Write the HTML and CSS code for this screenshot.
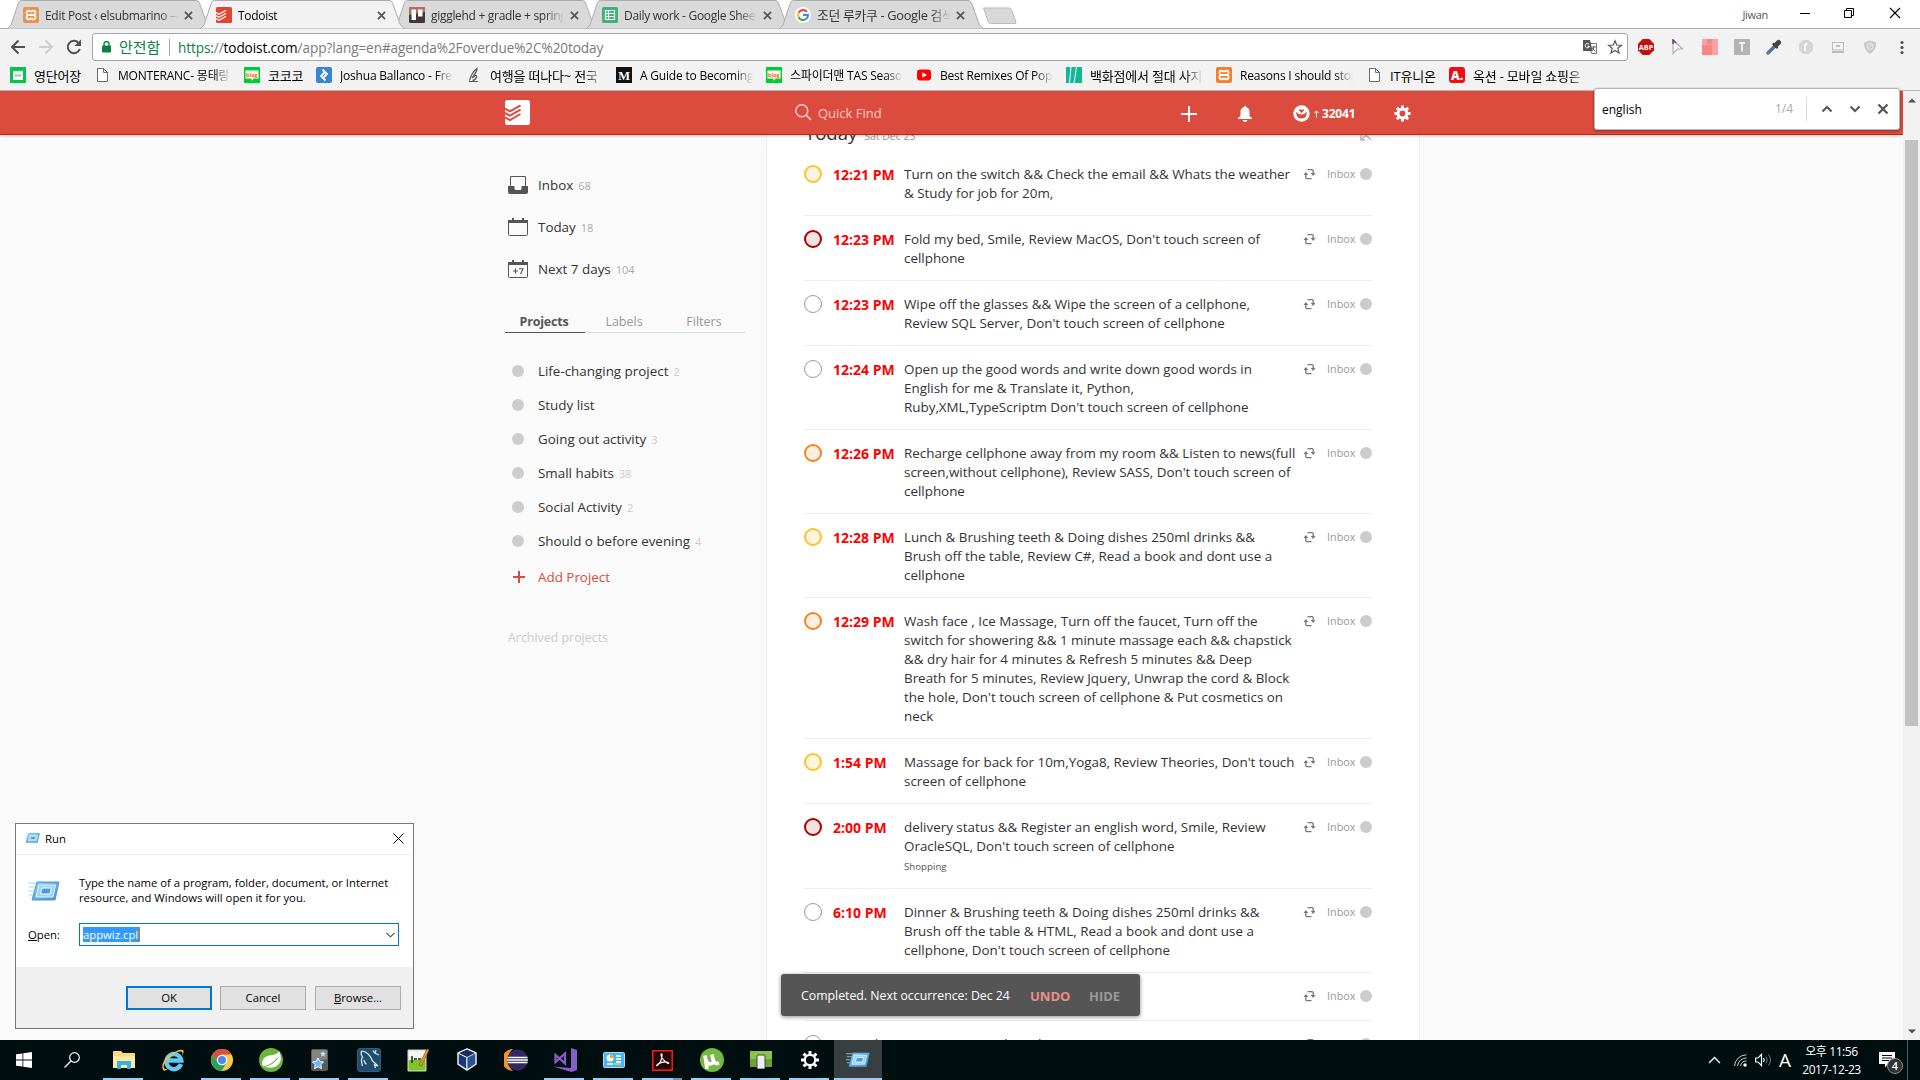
FILE: index.html
```html
<!DOCTYPE html>
<html lang="en">
<head>
<meta charset="utf-8">
<title>Todoist</title>
<link rel="stylesheet" href="styles.css">
</head>
<body>
<svg class="defs" width="0" height="0">
  <defs>
    <linearGradient id="runBlue" x1="0" y1="0" x2="1" y2="1"><stop offset="0" stop-color="#8fd0f5"/><stop offset="1" stop-color="#3d8fd0"/></linearGradient>
    <symbol id="tab-shape" viewBox="0 0 205 29"><path d="M0 29 L4 25 L11.500 2.500 Q12.300 .5 14.500 .5 H189 Q191.500 .5 192.300 2.500 L200.500 25 L205 29Z" stroke="#acacac"/></symbol>
    <symbol id="close" viewBox="0 0 10 10"><path d="M1 1 9 9 M9 1 1 9" stroke="currentColor" stroke-width="1.900"/></symbol>
    <symbol id="xampp" viewBox="0 0 16 16"><rect width="16" height="16" rx="2" fill="#f0802c"/><path d="M5 8 h6 M5.500 8 a2 2.200 0 1 1 1.500-3.600 h2 a2 2.200 0 1 1 1.500 3.600 a2 2.200 0 1 1-1.500 3.600 h-2 a2 2.200 0 1 1-1.500-3.600" fill="none" stroke="#fff" stroke-width="1.800"/></symbol>
    <symbol id="todo" viewBox="0 0 25 25"><path d="M0 8.500 L5 11.300 15.500 5.300 M0 13 L5 15.700 15.500 9.700 M0 17.400 L5 20.100 15.500 14" fill="none" stroke="currentColor" stroke-width="2"/></symbol>
    <symbol id="page" viewBox="0 0 16 16"><path d="M3.500 1.500 h6 l4 4 v9 h-10z M9.500 1.500 v4 h4" fill="#fff" stroke="#6a6a6a"/></symbol>
    <symbol id="blog" viewBox="0 0 16 16"><rect width="16" height="16" fill="#0c3"/><path d="M1.500 3.500 h13 v8 h-5 l-2 2.500 v-2.500 h-6z" fill="#fff"/><text x="2" y="9.800" font-family="Open Sans" font-size="5.500" font-weight="700" fill="#f60">blog</text></symbol>
    <symbol id="recur" viewBox="0 0 12 12"><path d="M4 1.600 h4.500 q1.200 0 1.200 1.200 v3.200 M8 10.600 h-4.500 q-1.200 0-1.200-1.200 v-3.200" fill="none" stroke="#777" stroke-width="1.300"/><path d="M7.200 5 h4.800 l-2.400 3z M0 7 h4.800 l-2.400-3z" fill="#777"/></symbol>
    <symbol id="cal" viewBox="0 0 20 18"><rect x=".5" y="2.500" width="19" height="15" rx="1" fill="none" stroke="#555"/><path d="M0 2 h20 v3 h-20z M4 0 h2 v2 h-2z M14 0 h2 v2 h-2z" fill="#555"/></symbol>
    <symbol id="run" viewBox="0 0 32 22"><path d="M0 2 h8 M1 6 h7 M0 10 h6 M1 14 h5" stroke="#a9d6f2"/><path d="M9 1 H31 L27 19 H4z" fill="url(#runBlue)" stroke="#4b98cf"/><path d="M11 4 H27.500 L25 16 H8z" fill="#9ad3f3" stroke="#e6f6ff"/><path d="M14 7 H23.500 L22 13 H12.500z" fill="#4a9bd6" stroke="#fff"/></symbol>
    <symbol id="gear" viewBox="0 0 18 18"><circle cx="9" cy="9" r="4.700" fill="none" stroke="currentColor" stroke-width="3.200"/><path d="M9 .5 V4 M9 14 V17.500 M.5 9 H4 M14 9 H17.500 M3 3 L5.500 5.500 M12.500 12.500 L15 15 M15 3 L12.500 5.500 M3 15 L5.500 12.500" stroke="currentColor" stroke-width="3"/></symbol>
  </defs>
</svg>

<div class="desktop">
  <div class="browser">
    <div class="tabstrip">
      <div class="tab"><svg class="tab-bg"><use href="#tab-shape"/></svg><svg class="fav dim"><use href="#xampp"/></svg><span class="tab-title">Edit Post ‹ elsubmarino — W</span><svg class="x"><use href="#close"/></svg></div>
      <div class="tab active"><svg class="tab-bg"><use href="#tab-shape"/></svg><svg class="fav" viewBox="0 0 16 16"><rect width="16" height="16" rx="1.500" fill="#e44332"/><path d="M0 5.500 L3 7.300 10 3.300 M0 8.500 L3 10.300 10 6.300 M0 11.500 L3 13.300 10 9.300" fill="none" stroke="#fff" stroke-width="1.300"/></svg><span class="tab-title">Todoist</span><svg class="x"><use href="#close"/></svg></div>
      <div class="tab"><svg class="tab-bg"><use href="#tab-shape"/></svg><svg class="fav" viewBox="0 0 16 16"><rect width="16" height="16" rx="1.500" fill="#42343c"/><path d="M0 8 V1.500 Q0 0 1.500 0 H14.500 Q16 0 16 1.500 V5z" fill="#b96d62"/><rect x="2.500" y="2.500" width="4.500" height="10.500" fill="#fff"/><rect x="9" y="2.500" width="4.500" height="7" fill="#fff"/></svg><span class="tab-title">gigglehd + gradle + spring</span><svg class="x"><use href="#close"/></svg></div>
      <div class="tab"><svg class="tab-bg"><use href="#tab-shape"/></svg><svg class="fav" viewBox="0 0 16 16"><rect width="16" height="16" rx="1.500" fill="#3fb27a"/><path d="M3.500 3.500 h9 v9 h-9z M3.500 6.500 h9 M3.500 9.500 h9 M6.500 3.500 v9" fill="none" stroke="#fff" stroke-width="1.200"/></svg><span class="tab-title">Daily work - Google Sheets</span><svg class="x"><use href="#close"/></svg></div>
      <div class="tab"><svg class="tab-bg"><use href="#tab-shape"/></svg><svg class="fav" viewBox="0 0 16 16"><circle cx="8" cy="8" r="8" fill="#fff"/><g fill="none" stroke-width="2"><path d="M12 4.800 A5 5 0 0 0 3.600 5.700" stroke="#ea4335"/><path d="M3.600 5.700 A5 5 0 0 0 3.600 10.300" stroke="#fbbc05"/><path d="M3.600 10.300 A5 5 0 0 0 11.300 11.800" stroke="#34a853"/><path d="M11.300 11.800 A5 5 0 0 0 13 8 H8" stroke="#4285f4"/></g></svg><span class="tab-title ko">조던 루카쿠 - Google 검색</span><svg class="x"><use href="#close"/></svg></div>
      <svg class="newtab" viewBox="0 0 36 18"><path d="M1.500 1 H27 Q29 1 29.700 3 L34 15 Q34.500 16.500 33 16.500 H8.500 Q7 16.500 6.300 15z" fill="#d8d8d8" stroke="#bbb"/></svg>
      <div class="win-controls">
        <span class="profile">Jiwan</span>
        <svg width="10" height="12" viewBox="0 0 10 12"><path d="M0 6.500 H10" stroke="#000"/></svg>
        <svg width="11" height="12" viewBox="0 0 11 12"><path d="M.5 3.500 h7 v7 h-7z M2.500 3.500 v-2 h7 v7 h-2" fill="none" stroke="#000"/></svg>
        <svg width="12" height="12" viewBox="0 0 12 12"><path d="M1 1 11 11 M11 1 1 11" stroke="#000" stroke-width="1.100"/></svg>
      </div>
    </div>

    <div class="toolbar">
      <div class="nav">
        <svg width="16" height="16" viewBox="0 0 16 16"><path d="M15 8 H2 M8.500 1.500 L2 8 L8.500 14.500" fill="none" stroke="#505050" stroke-width="2"/></svg>
        <svg width="16" height="16" viewBox="0 0 16 16"><path d="M1 8 H14 M7.500 1.500 L14 8 L7.500 14.500" fill="none" stroke="#cdcdcd" stroke-width="2"/></svg>
        <svg width="16" height="16" viewBox="0 0 16 16"><path d="M13.800 10 A6.200 6.200 0 1 1 12.600 3.800" fill="none" stroke="#505050" stroke-width="2"/><path d="M15 0.500 V7 H8.500z" fill="#505050"/></svg>
      </div>
      <div class="omnibox">
        <svg class="lock" width="10" height="12" viewBox="0 0 10 12"><rect x="0" y="4.500" width="9" height="7" rx=".8" fill="#0b8043"/><path d="M2 5 V3 a2.500 2.500 0 0 1 5 0 V5" fill="none" stroke="#0b8043" stroke-width="1.400"/></svg>
        <span class="secure">안전함</span>
        <span class="url"><i class="green">https:</i>//<b>todoist.com</b>/app?lang=en#agenda%2Foverdue%2C%20today</span>
        <svg class="translate" width="16" height="16" viewBox="0 0 16 16"><path d="M6.500 4.500 h8 v10 h-5z" fill="#fff" stroke="#777"/><path d="M1 1 h7 l2.500 11 h-9.500z" fill="#555"/><path d="M7 5.200 a2.200 2.200 0 1 0 .5 2 h-2" fill="none" stroke="#fff"/><path d="M9.500 8 h4.500 M11.800 7 q0 4-1.800 5 M10 9 l3.500 3.500" stroke="#666" fill="none"/></svg>
        <svg width="16" height="16" viewBox="0 0 16 16"><path d="M8 1.800 9.700 6 14.500 6.300 10.800 9.300 12 14 8 11.400 4 14 5.200 9.300 1.500 6.300 6.300 6z" fill="none" stroke="#555" stroke-width="1.200"/></svg>
      </div>
      <div class="extensions">
        <svg viewBox="0 0 16 16"><path d="M4.700 0 h6.600 L16 4.700 v6.600 L11.300 16 H4.700 L0 11.300 V4.700z" fill="#c70d0d"/><text x=".8" y="10.800" font-family="Open Sans" font-weight="700" font-size="7.300" fill="#fff">ABP</text></svg>
        <svg viewBox="0 0 16 16"><path d="M3 1 L12.500 10 H7.500 L3 14.500z" fill="#f6f6f6" stroke="#b3b3b3" stroke-width="1.200"/><path d="M3 5 V1 L6 4" stroke="#6a3a8c" fill="none" stroke-width="1.500"/></svg>
        <svg viewBox="0 0 16 16"><path d="M0 0 h16 v16 h-16z" fill="#fda3a3"/><path d="M5 0 h5 v5 h-5z M0 6 h10 v10 h-10z" fill="#fd8484"/></svg>
        <svg viewBox="0 0 16 16"><rect width="16" height="16" rx="1" fill="#b3b3b3"/><path d="M5 4 h6 M8 4 v8.500" stroke="#fff" stroke-width="1.500"/></svg>
        <svg viewBox="0 0 16 16"><path d="M2 14 L9 7" stroke="#777" stroke-width="3.600" stroke-linecap="round"/><path d="M3 13 L8 8" stroke="#3b6cd8" stroke-width="2"/><path d="M7.500 5 L11 8.500" stroke="#333" stroke-width="2.200" stroke-linecap="round"/><path d="M10 6 L12.500 3.500" stroke="#444" stroke-width="5" stroke-linecap="round"/></svg>
        <svg viewBox="0 0 16 16"><path d="M5 1 h6 L15 5 v6 L11 15 H5 L1 11 V5z" fill="#d5d5d5"/><path d="M7 12 V6.500 q0-2 2.500-1.500" fill="none" stroke="#fff" stroke-width="1.500"/></svg>
        <svg viewBox="0 0 16 16"><rect x="2.500" y="3.500" width="11" height="7.500" fill="#f5f5f5" stroke="#bbb"/><path d="M6 6 h4 v2 h-4z M2 12 h12 v2 h-12z" fill="#bbb"/></svg>
        <svg viewBox="0 0 16 16"><path d="M8 1.500 14 3.500 Q14.500 11 8 15 Q1.500 11 2 3.500z" fill="#c9c9c9"/><circle cx="8" cy="7.500" r="3" fill="none" stroke="#eee"/><path d="M6 9.500 L10 5.500" stroke="#eee"/></svg>
        <svg viewBox="0 0 16 16"><g fill="#505050"><circle cx="8" cy="3.500" r="1.600"/><circle cx="8" cy="8.500" r="1.600"/><circle cx="8" cy="13.500" r="1.600"/></g></svg>
      </div>
    </div>

    <div class="bookmarks">
      <div class="bm ko"><svg viewBox="0 0 16 16"><path d="M0 0 h16 v16 h-16z" fill="#07c34b"/><path d="M3 3.500 l1.500 1 1.500-1 1.500 1 1.500-1 1.500 1 1.500-1 1 1 v8.500 h-10z" fill="#fff"/><path d="M4.500 8.500 h7" stroke="#7cdc9c" stroke-width="2"/></svg><span class="w47">영단어장</span></div>
      <div class="bm"><svg><use href="#page"/></svg><span class="w113">MONTERANC- 몽태랑</span></div>
      <div class="bm ko"><svg><use href="#blog"/></svg><span class="w35">코코코</span></div>
      <div class="bm"><svg viewBox="0 0 16 16"><rect width="16" height="16" rx="2" fill="#3a84d8"/><path d="M6.500 2.500 L11 7 L7.500 10.500 M9.500 13.500 L5 9 L8.500 5.500" fill="none" stroke="#fff" stroke-width="1.800"/></svg><span class="w113">Joshua Ballanco - Free</span></div>
      <div class="bm ko"><svg viewBox="0 0 16 16"><path d="M3 14.500 h9 M3.500 13.500 Q6 5 11 1.500 Q11.500 4 6 11 Q11 6.500 10.500 10 Q9.500 13 6.500 13.500" fill="none" stroke="#555" stroke-width="1.200"/></svg><span class="w113">여행을 떠나다~ 전국</span></div>
      <div class="bm"><svg viewBox="0 0 16 16"><path d="M0 0 h16 v16 h-16z" fill="#111"/><text x="2.200" y="12.500" font-family="Liberation Serif" font-weight="700" font-size="12.500" fill="#fff">M</text></svg><span class="w113">A Guide to Becoming a</span></div>
      <div class="bm"><svg><use href="#blog"/></svg><span class="w113">스파이더맨 TAS Season</span></div>
      <div class="bm"><svg viewBox="0 0 16 16"><rect x="1" y="2.500" width="14" height="11" rx="3" fill="#f00"/><path d="M6.300 5.300 L11 8 L6.300 10.700z" fill="#fff"/></svg><span class="w113">Best Remixes Of Popular</span></div>
      <div class="bm ko"><svg viewBox="0 0 16 16"><path d="M0 0 h16 v16 h-16z" fill="#12b894"/><path d="M5 0 L3.500 16 M10.500 0 L8 16" stroke="#fff"/></svg><span class="w113">백화점에서 절대 사지</span></div>
      <div class="bm"><svg><use href="#xampp"/></svg><span class="w113">Reasons I should stop</span></div>
      <div class="bm ko"><svg><use href="#page"/></svg><span class="w46">IT유니온</span></div>
      <div class="bm ko"><svg viewBox="0 0 16 16"><rect width="16" height="16" rx="3" fill="#f00b17"/><text x="2" y="12.500" font-family="Open Sans" font-weight="800" font-size="12" fill="#fff">A.</text></svg><span class="w113">옥션 - 모바일 쇼핑은</span></div>
    </div>

    <div class="viewport">
      <div class="page">
        <header class="topbar">
          <svg class="logo" viewBox="0 0 25 25"><rect width="25" height="25" rx="2.500" fill="#fff"/><use href="#todo"/></svg>
          <div class="find">
            <svg width="17" height="17" viewBox="0 0 17 17"><circle cx="6.800" cy="6.800" r="6" fill="none" stroke="#f6cdc8" stroke-width="1.500"/><path d="M11 11 L16 16" stroke="#f6cdc8" stroke-width="1.700"/></svg>
            <span>Quick Find</span>
          </div>
          <div class="actions">
            <svg width="16" height="16" viewBox="0 0 16 16"><path d="M0 8 H16 M8 0 V16" stroke="#fff" stroke-width="2"/></svg>
            <svg class="bell" width="14" height="16" viewBox="0 0 14 16"><path d="M6 0 h2 v1 q3.500 1 3.500 5 v4 L14 12 v1 H0 v-1 L2.500 10 V6 Q2.500 2 6 1z M4.500 14 h5 q-.5 2-2.500 2 t-2.500-2z" fill="#fff"/></svg>
            <div class="karma"><svg width="17" height="17" viewBox="0 0 17 17"><circle cx="8.500" cy="8.500" r="8.200" fill="#fff"/><path d="M3.300 6.500 Q5 9.500 8.500 9.500 Q12 9.500 13.700 6.500 Q14.500 13 8.500 13.500 Q2.500 13 3.300 6.500z" fill="#db4c3f"/><path d="M8.500 8 L6 5.600 Q6 4 7.300 4.200 L8.500 5 L9.700 4.200 Q11 4 11 5.600z" fill="#db4c3f"/></svg><svg width="5" height="8" viewBox="0 0 5 8"><path d="M2.500 1 V7.500 M.3 3.200 L2.500 1 L4.700 3.200" fill="none" stroke="#fff"/></svg><span>32041</span></div>
            <svg class="cog" width="17" height="17"><use href="#gear"/></svg>
          </div>
        </header>
        <div class="content">
          <aside class="sidebar">
            <ul class="filters">
              <li><svg width="20" height="18" viewBox="0 0 20 18"><path d="M2.500 11 V.5 H17.500 V11" fill="none" stroke="#555"/><path d="M0 10 H6.500 V12.500 Q6.500 14 8 14 H12 Q13.500 14 13.500 12.500 V10 H20 V16 Q20 18 18 18 H2 Q0 18 0 16z" fill="#555"/></svg><span>Inbox</span><small>68</small></li>
              <li><svg width="20" height="18"><use href="#cal"/></svg><span>Today</span><small>18</small></li>
              <li><svg width="20" height="18" viewBox="0 0 20 18"><use href="#cal"/><path d="M5 11 h5 M7.500 8.500 v5 M11 8.700 h4 L12.500 14" fill="none" stroke="#555" stroke-width="1.100"/></svg><span>Next 7 days</span><small>104</small></li>
            </ul>
            <nav class="tabs"><span class="on">Projects</span><span>Labels</span><span>Filters</span></nav>
            <ul class="projects">
              <li><i></i><span>Life-changing project</span><small>2</small></li>
              <li><i></i><span>Study list</span></li>
              <li><i></i><span>Going out activity</span><small>3</small></li>
              <li><i></i><span>Small habits</span><small>38</small></li>
              <li><i></i><span>Social Activity</span><small>2</small></li>
              <li><i></i><span>Should o before evening</span><small>4</small></li>
            </ul>
            <div class="add"><svg width="12" height="12" viewBox="0 0 12 12"><path d="M0 6 H12 M6 0 V12" stroke="#db4c3f" stroke-width="2"/></svg><span>Add Project</span></div>
            <div class="archived">Archived projects</div>
          </aside>
          <main class="main">
            <div class="day"><h2>Today</h2><span>Sat Dec 23</span><svg width="12" height="12" viewBox="0 0 12 12"><path d="M1 11 L11 1 M1 1 L11 11 M1 6 V11 H5" stroke="#bbb" stroke-width="1.500" fill="none"/></svg></div>
            <ul class="tasks">
              <li><i class="check p3"></i><b>12:21 PM</b><p>Turn on the switch &amp;&amp; Check the email &amp;&amp; Whats the weather<br>&amp; Study for job for 20m,</p><svg><use href="#recur"/></svg><em>Inbox</em><u></u></li>
              <li><i class="check p1"></i><b>12:23 PM</b><p>Fold my bed, Smile, Review MacOS, Don't touch screen of<br>cellphone</p><svg><use href="#recur"/></svg><em>Inbox</em><u></u></li>
              <li><i class="check"></i><b>12:23 PM</b><p>Wipe off the glasses &amp;&amp; Wipe the screen of a cellphone,<br>Review SQL Server, Don't touch screen of cellphone</p><svg><use href="#recur"/></svg><em>Inbox</em><u></u></li>
              <li><i class="check"></i><b>12:24 PM</b><p>Open up the good words and write down good words in<br>English for me &amp; Translate it, Python,<br>Ruby,XML,TypeScriptm Don't touch screen of cellphone</p><svg><use href="#recur"/></svg><em>Inbox</em><u></u></li>
              <li><i class="check p2"></i><b>12:26 PM</b><p>Recharge cellphone away from my room &amp;&amp; Listen to news(full<br>screen,without cellphone), Review SASS, Don't touch screen of<br>cellphone</p><svg><use href="#recur"/></svg><em>Inbox</em><u></u></li>
              <li><i class="check p3"></i><b>12:28 PM</b><p>Lunch &amp; Brushing teeth &amp; Doing dishes 250ml drinks &amp;&amp;<br>Brush off the table, Review C#, Read a book and dont use a<br>cellphone</p><svg><use href="#recur"/></svg><em>Inbox</em><u></u></li>
              <li><i class="check p2"></i><b>12:29 PM</b><p>Wash face , Ice Massage, Turn off the faucet, Turn off the<br>switch for showering &amp;&amp; 1 minute massage each &amp;&amp; chapstick<br>&amp;&amp; dry hair for 4 minutes &amp; Refresh 5 minutes &amp;&amp; Deep<br>Breath for 5 minutes, Review Jquery, Unwrap the cord &amp; Block<br>the hole, Don't touch screen of cellphone &amp; Put cosmetics on<br>neck</p><svg><use href="#recur"/></svg><em>Inbox</em><u></u></li>
              <li><i class="check p3"></i><b>1:54 PM</b><p>Massage for back for 10m,Yoga8, Review Theories, Don't touch<br>screen of cellphone</p><svg><use href="#recur"/></svg><em>Inbox</em><u></u></li>
              <li><i class="check p1"></i><b>2:00 PM</b><p>delivery status &amp;&amp; Register an english word, Smile, Review<br>OracleSQL, Don't touch screen of cellphone<br><small>Shopping</small></p><svg><use href="#recur"/></svg><em>Inbox</em><u></u></li>
              <li><i class="check"></i><b>6:10 PM</b><p>Dinner &amp; Brushing teeth &amp; Doing dishes 250ml drinks &amp;&amp;<br>Brush off the table &amp; HTML, Read a book and dont use a<br>cellphone, Don't touch screen of cellphone</p><svg><use href="#recur"/></svg><em>Inbox</em><u></u></li>
              <li><i class="check"></i><b></b><p></p><svg><use href="#recur"/></svg><em>Inbox</em><u></u></li>
              <li><i class="check"></i><p>Write down some new words and</p><svg><use href="#recur"/></svg><em>Inbox</em><u></u></li>
            </ul>
          </main>
        </div>
      </div>
      <div class="scrollbar">
        <svg width="8" height="5" viewBox="0 0 8 5"><path d="M0 4.500 L4 .5 L8 4.500z" fill="#505050"/></svg>
        <div class="thumb"></div>
        <svg class="down" width="8" height="5" viewBox="0 0 8 5"><path d="M0 .5 L4 4.500 L8 .5z" fill="#505050"/></svg>
      </div>
    </div>
  </div>

  <div class="taskbar">
    <div class="item"><svg width="16" height="16" viewBox="0 0 16 16"><path d="M0 2.300 L6.500 1.400 V7.500 H0z M7.300 1.300 L16 0 V7.500 H7.300z M0 8.400 H6.500 V14.600 L0 13.700z M7.300 8.400 H16 V16 L7.300 14.700z" fill="#fff"/></svg></div>
    <div class="item search"><svg width="16" height="16" viewBox="0 0 16 16"><circle cx="10.500" cy="5.500" r="4.800" fill="none" stroke="#fff" stroke-width="1.200"/><path d="M7 9 L.5 15.500" stroke="#fff" stroke-width="1.300"/></svg></div>
    <div class="item open"><svg width="22" height="18" viewBox="0 0 22 18"><path d="M0 1 Q0 0 1 0 H8 L10 2 H21 Q22 2 22 3 V17 H0z" fill="#fbd97c"/><path d="M0 5 H22 V17 H0z" fill="#ffe9a4"/><path d="M4 18 V11 Q4 10 5 10 H17 Q18 10 18 11 V18 H14 V14 H8 V18z" fill="#39b1e7"/></svg></div>
    <div class="item"><svg width="24" height="24" viewBox="0 0 24 24"><path d="M20 16 A7.500 7.500 0 1 1 20.300 12.500 H7" fill="none" stroke="#62c8f4" stroke-width="4.400"/><path d="M2 22 Q-1 15 8 7.500 Q18 .5 22 2 Q24 4 20 9 Q23 4 20 3.500 Q15 3 8 10 Q0 18 4 21 Q6 21.500 8 20 Q4 24 2 22z" fill="#f6c22e"/></svg></div>
    <div class="item open"><svg width="22" height="22" viewBox="0 0 22 22"><circle cx="11" cy="11" r="11" fill="#fbcb43"/><path d="M1.500 5.500 A11 11 0 0 1 20.500 5.500 H11 Q6 6 6.500 13z" fill="#d94f3f"/><path d="M1.500 5.500 A11 11 0 0 0 10.500 22 L15.500 14 Q10 18 6.500 13z" fill="#2ba15c"/><circle cx="11" cy="11" r="5.200" fill="#fff"/><circle cx="11" cy="11" r="4" fill="#4c86ee"/></svg></div>
    <div class="item open"><svg width="24" height="24" viewBox="0 0 24 24"><circle cx="12" cy="12" r="12" fill="#6cb33f"/><path d="M20 3 Q19 6 13 7 Q4 8 3 14 Q2.500 18 6 19 Q18 22 21.500 13 Q22.500 9 20 3z" fill="#fff"/><path d="M5 18.500 Q13 17.500 18.500 10" fill="none" stroke="#6cb33f" stroke-width="1.200"/></svg></div>
    <div class="item open"><svg width="18" height="22" viewBox="0 0 18 22"><rect width="17" height="22" rx="2" fill="#5b5b5b"/><path d="M1 1 H16 V10 L1 13z" fill="#858585"/><path d="M7 9 l1.700 3.400 3.800.6-2.700 2.700.6 3.900-3.400-1.800-3.400 1.800.6-3.900L1.500 13l3.800-.6z" fill="#63baf5" stroke="#fff"/><path d="M12 2 l.8 1.700 2 .3-1.400 1.400.3 2-1.700-.9-1.700.9.3-2L9.200 4l2-.3z" fill="#b9e3ff"/></svg></div>
    <div class="item open"><svg width="24" height="24" viewBox="0 0 24 24"><rect x=".5" y=".5" width="23" height="23" rx="2.500" fill="#1f4d6e" stroke="#315f80"/><path d="M5.500 18 Q3.500 12 5.500 9 Q3 5 5 3 Q12 4 15.500 13 L21 18 L17.500 17 L18.500 20 M7 12 Q8 16 9.500 16" fill="none" stroke="#e6eef4" stroke-width="1.200"/><path d="M16 2.500 L17.500 5 L22 7 M19 2 L18 5" stroke="#cfdde8" stroke-width="1.300" fill="none"/></svg></div>
    <div class="item"><svg width="22" height="24" viewBox="0 0 22 24"><path d="M1 2 H19 V23 H1z" fill="#f5f5ef" stroke="#ccc"/><path d="M1.500 12 H18.500 V22.500 H1.500z" fill="#7dc526"/><path d="M5 8 V15 M7 11 h3 M11 11 h3" stroke="#222" stroke-width="1.500"/><path d="M12 17 L20 1 L22 2 L14.500 18z" fill="#e89a2b" stroke="#85561c" stroke-width=".7"/></svg></div>
    <div class="item"><svg width="20" height="24" viewBox="0 0 20 24"><path d="M10 1 L19 5 V16 L10 22 L1 16 V5z" fill="#193b70" stroke="#e6edf8" stroke-width="1.500"/><path d="M1 5 L10 1 L19 5 L10 9.500z" fill="#143060" stroke="#fff"/><path d="M10 9.500 V21" stroke="#fff" stroke-width="1.500"/><path d="M10 9.500 L18 5.500 V15.500 L10 21z" fill="#3a6aaa" opacity=".55"/></svg></div>
    <div class="item"><svg width="24" height="22" viewBox="0 0 24 22"><path d="M9 0 A11 11 0 0 0 9 22 A14 14 0 0 1 9 0z" fill="#f7941e"/><circle cx="13.500" cy="11" r="10.500" fill="#342863"/><path d="M3.500 8.500 H23.500 M3 11 H24 M3.500 13.500 H23.500" stroke="#fff" stroke-width="1.400"/></svg></div>
    <div class="item open"><svg width="24" height="24" viewBox="0 0 24 24"><path d="M18 0 L24 2 V22 L18.500 24 L0 18.500 L18 20z" fill="#865fc5"/><path d="M2.500 7 V14 L6.500 10.500z M6.500 10.500 L12 5.500 V15.500z" fill="none" stroke="#865fc5" stroke-width="2.200"/></svg></div>
    <div class="item open"><svg width="22" height="17" viewBox="0 0 22 17"><rect x=".5" y=".5" width="21" height="15" rx="1" fill="#48b5ef" stroke="#a6dcf8"/><circle cx="7" cy="6" r="3.500" fill="#fff"/><path d="M7 6 V2.500 A3.500 3.500 0 0 1 10.500 6z" fill="#f6a623"/><path d="M13 4 h5 M13 7 h5 M13 10 h5 M4 12 h6" stroke="#fff" stroke-width="1.500"/><path d="M11 12 h7" stroke="#f6c84a" stroke-width="1.500"/></svg></div>
    <div class="item open multi"><svg width="21" height="21" viewBox="0 0 21 21"><rect x=".8" y=".8" width="19.400" height="19.400" fill="#260606" stroke="#ed1c16" stroke-width="1.600"/><path d="M4.500 16 Q10 12 10 5 Q10 3 9 4.500 Q9 9 16 13.500 Q18 13 14.500 12 Q9 11.500 5 15z" fill="none" stroke="#fff" stroke-width="1.200"/></svg></div>
    <div class="item open"><svg width="24" height="24" viewBox="0 0 24 24"><circle cx="12" cy="12" r="12" fill="#74b943"/><path d="M7 21 L5 7.500 M6 12 Q8 17.500 12 15.500 Q14 14.500 13 11 L12 6.500 M14 13 Q15 16.500 19 15" fill="none" stroke="#fff" stroke-width="3.600"/></svg></div>
    <div class="item open"><svg width="22" height="18" viewBox="0 0 22 18"><path d="M0 0 H22 V16 H0z" fill="#8bc34a"/><path d="M0 8 H22 V16 H0z" fill="#6da23a"/><rect x="7" y="4" width="8" height="14" rx="1" fill="#eee" stroke="#444"/></svg></div>
    <div class="item open"><svg width="18" height="18" viewBox="0 0 18 18"><circle cx="9" cy="9" r="5.200" fill="none" stroke="#fff" stroke-width="2.200"/><path d="M9 0 V3.500 M9 14.500 V18 M0 9 H3.500 M14.500 9 H18 M2.600 2.600 L5 5 M13 13 L15.400 15.400 M15.400 2.600 L13 5 M2.600 15.400 L5 13" stroke="#fff" stroke-width="3"/></svg></div>
    <div class="item open current"><svg width="24" height="17"><use href="#run"/></svg></div>
    <div class="tray">
      <svg width="13" height="8" viewBox="0 0 13 8"><path d="M1 7 L6.500 1.500 L12 7" fill="none" stroke="#fff" stroke-width="1.400"/></svg>
      <svg width="13" height="13" viewBox="0 0 13 13"><g fill="none" stroke="#ccc"><path d="M.5 12 A12 12 0 0 1 12.500 .8 M3.500 12 A9 9 0 0 1 12.500 4 M6.500 12 A6 6 0 0 1 12.500 7"/></g><circle cx="11" cy="11" r="1.700" fill="#fff"/></svg>
      <svg width="17" height="14" viewBox="0 0 17 14"><path d="M.6 5 H3 L6.500 1.500 V12.500 L3 9 H.6z M8.500 5 q1.500 2 0 4" fill="none" stroke="#fff" stroke-width="1.200"/><path d="M11 3.500 q2.500 3.500 0 7 M13.500 1.500 q4 5.500 0 11" fill="none" stroke="#777"/></svg>
      <span class="ime">A</span>
      <div class="clock"><span>오후 11:56</span><span>2017-12-23</span></div>
      <div class="notif"><svg width="16" height="16" viewBox="0 0 16 16"><path d="M0 0 H16 V12 H9 L6 15.500 V12 H0z" fill="#fff"/><path d="M3 3.500 h10 M3 6 h10 M3 8.500 h7" stroke="#000c0e"/></svg><span>4</span></div>
      <div class="peek"></div>
    </div>
  </div>

  <div class="findbar">
    <span class="query">english</span><span class="count">1/4</span>
    <svg width="12" height="12" viewBox="0 0 12 12"><path d="M1.500 8.500 L6 4 L10.500 8.500" fill="none" stroke="#555" stroke-width="2"/></svg>
    <svg width="12" height="12" viewBox="0 0 12 12"><path d="M1.500 3.500 L6 8 L10.500 3.500" fill="none" stroke="#555" stroke-width="2"/></svg>
    <svg width="12" height="12" viewBox="0 0 12 12"><path d="M1.500 1.500 10.500 10.500 M10.500 1.500 1.500 10.500" stroke="#555" stroke-width="2.200"/></svg>
  </div>

  <div class="toast"><span>Completed. Next occurrence: Dec 24</span><b class="undo">UNDO</b><b class="hide">HIDE</b></div>

  <div class="run">
    <div class="run-title"><svg width="16" height="11"><use href="#run"/></svg><span>Run</span><svg class="run-x" width="11" height="11" viewBox="0 0 11 11"><path d="M.5 .5 10.500 10.500 M10.500 .5 .5 10.500" stroke="#000"/></svg></div>
    <div class="run-body">
      <div class="run-info"><svg width="32" height="22"><use href="#run"/></svg><p>Type the name of a program, folder, document, or Internet<br>resource, and Windows will open it for you.</p></div>
      <div class="run-open"><label><u>O</u>pen:</label><div class="combo"><span>appwiz.cpl</span><svg width="9" height="6" viewBox="0 0 9 6"><path d="M.5 .8 L4.500 4.800 L8.500 .8" fill="none" stroke="#444" stroke-width="1.100"/></svg></div></div>
    </div>
    <div class="run-foot"><button class="default">OK</button><button>Cancel</button><button><u>B</u>rowse...</button></div>
  </div>
</div>
</body>
</html>
```
FILE: styles.css
```css
* { box-sizing: border-box; }
body { margin: 0; overflow: hidden; font-family: "Open Sans", "Noto Sans CJK KR", sans-serif; font-size: 13px; color: #333; }
ul, p, h2 { margin: 0; padding: 0; list-style: none; }
svg { flex: none; display: block; }
.defs { position: absolute; }

.desktop { position: relative; width: 1920px; height: 1080px; display: flex; flex-direction: column; overflow: hidden; }
.browser { flex: 1; min-height: 0; display: flex; flex-direction: column; background: #fff; }

/* tab strip */
.tabstrip { height: 29px; padding-left: 7px; display: flex; border-bottom: 1px solid #acacac; flex: none; }
.tab { position: relative; width: 205px; height: 29px; margin-right: -12px; padding: 0 19px 5px 16px; display: flex; align-items: center; gap: 6px; font-size: 12px; flex: none; }
.tab-bg { position: absolute; left: 0; top: 0; width: 205px; height: 29px; fill: #d9d9d9; }
.tab.active { z-index: 2; color: #000; }
.tab.active .tab-bg { fill: #f2f2f2; }
.tab > *:not(.tab-bg) { position: relative; }
.tab .fav { width: 16px; height: 16px; margin-top: 6px; }
.dim { opacity: .8; }
.tab .x { width: 9px; height: 9px; margin-top: 6px; color: #555; }
.tab-title { flex: 1; margin-top: 6px; white-space: nowrap; overflow: hidden; letter-spacing: -.3px; -webkit-mask-image: linear-gradient(90deg, #000 86%, transparent); mask-image: linear-gradient(90deg, #000 86%, transparent); }
.tab-title.ko { font-size: 12.800px; line-height: 16px; }
.newtab { width: 36px; height: 18px; margin: 7px 0 0 10px; }
.win-controls { margin-left: auto; padding: 0 19px 2px 0; display: flex; align-items: center; }
.profile { font-size: 11px; color: #555; letter-spacing: -.3px; margin: 2px 32px 0 0; }
.win-controls svg + svg { margin-left: 34px; }

/* toolbar */
.toolbar { height: 32px; padding: 4px 10px 0 10px; background: #f2f2f2; display: flex; align-items: flex-start; flex: none; }
.nav { display: flex; gap: 12px; width: 82px; padding-top: 6px; }
.omnibox { width: 1536px; height: 28px; border: 1px solid #a6a6a6; border-radius: 3px; background: #fff; display: flex; align-items: center; padding: 0 4px 0 9px; font-size: 13.600px; }
.secure { color: #0b8043; margin-left: 7px; padding-right: 9px; border-right: 1px solid #aaa; width: 51px; line-height: 17px; white-space: nowrap; font-size: 15px; letter-spacing: -.1px; }
.url { flex: 1; margin-left: 8px; color: #7a7a7a; white-space: nowrap; letter-spacing: -.1px; }
.url b { font-weight: 400; color: #000; }
.url .green { font-style: normal; color: #0b8043; }
.translate { margin-right: 9px; }
.extensions { display: flex; gap: 16px; margin-left: 10px; padding-top: 6px; }
.extensions svg { width: 16px; height: 16px; }

/* bookmarks */
.bookmarks { height: 30px; padding: 0 0 1px 10px; background: #f2f2f2; border-bottom: 1px solid #b6b6b6; display: flex; align-items: center; flex: none; font-size: 12px; color: #000; }
.bm { display: flex; align-items: center; gap: 8px; margin-right: 13px; }
.bm svg { width: 16px; height: 16px; }
.bm span { overflow: hidden; white-space: nowrap; line-height: 18px; padding-top: 1px; letter-spacing: -.2px; }
.bm.ko span { font-size: 13px; }
.w47 { width: 47px; } .w35 { width: 35px; } .w46 { width: 46px; }
.w113 { width: 113px; -webkit-mask-image: linear-gradient(90deg, #000 84%, transparent); mask-image: linear-gradient(90deg, #000 84%, transparent); }

/* page */
.viewport { flex: 1; min-height: 0; display: flex; background: #fafafa; }
.page { width: 1903px; display: flex; flex-direction: column; overflow: hidden; }
.topbar { height: 44px; flex: none; background: #db4c3f; border-bottom: 1px solid #cf2000; display: flex; align-items: center; padding-left: 505px; z-index: 1; box-shadow: 0 1px 3px rgba(0,0,0,.2); }
.logo { width: 25px; height: 25px; color: #db4c3f; }
.find { width: 386px; margin-left: 265px; display: flex; align-items: center; gap: 6px; color: #f6cdc8; }
.find span { padding-top: 1px; }
.actions { display: flex; align-items: center; }
.actions > svg { margin-top: 2px; }
.actions .bell { margin-left: 41px; }
.karma { display: flex; align-items: center; margin: 2px 0 0 41px; color: #fff; font-weight: 700; font-size: 12px; letter-spacing: -.2px; width: 62px; }
.karma svg + svg { margin: 0 3px 0 4px; }
.actions .cog { margin-left: 39px; color: #fff; }
.content { flex: 1; min-height: 0; display: flex; padding-left: 505px; overflow: hidden; }

.sidebar { width: 261px; padding-top: 29px; flex: none; font-size: 13.400px; }
.filters li { height: 42px; display: flex; align-items: center; padding-left: 3px; }
.filters span { margin-left: 10px; }
.sidebar small { font-size: 11px; color: #aaa; margin: 1px 0 0 5px; }
.tabs { width: 240px; height: 29px; margin-top: 14px; border-bottom: 1px solid #ddd; display: flex; font-size: 12.500px; color: #999; }
.tabs span { width: 80px; height: 29px; line-height: 35px; text-align: center; padding-right: 2px; }
.tabs .on { border-bottom: 1px solid #555; font-weight: 700; color: #555; letter-spacing: -.2px; }
.projects { margin-top: 21px; }
.projects li { height: 34px; display: flex; align-items: center; padding-left: 7px; }
.projects i { width: 12px; height: 12px; border-radius: 50%; background: #ccc; }
.projects span { margin-left: 14px; }
.projects small { color: #ccc; }
.add { height: 38px; display: flex; align-items: center; padding-left: 8px; gap: 13px; color: #db4c3f; }
.archived { margin: 33px 0 0 3px; color: #ccc; line-height: 18px; font-size: 12.400px; }

.main { width: 654px; background: #fff; border: 1px solid #eee; border-width: 0 1px; padding: 0 47px 0 37px; overflow: hidden; }
.day { margin-top: -17px; height: 33px; display: flex; align-items: baseline; line-height: 30px; padding-left: 1px; }
.day h2 { font-size: 18.500px; font-weight: 400; line-height: 30px; }
.day span { font-size: 10.500px; color: #999; margin-left: 7px; }
.day svg { margin-left: auto; align-self: center; }
.tasks { font-size: 13.400px; }
.tasks li { display: flex; align-items: flex-start; padding: 14px 0 12px; min-height: 48px; border-bottom: 1px solid #eee; line-height: 19px; }
.check { width: 18px; height: 18px; border-radius: 50%; border: 1px solid #999; margin-right: 11px; flex: none; }
.check.p1 { border: 2px solid #a80000; background: #f5e3e3; }
.check.p2 { border: 2px solid #f5831f; background: #feefe3; }
.check.p3 { border: 2px solid #fcc12d; background: #fff5de; }
.tasks b { width: 71px; color: red; flex: none; white-space: nowrap; font-size: 14px; }
.tasks p { flex: 1; min-width: 0; white-space: nowrap; }
.tasks small { font-size: 9.700px; line-height: 20px; display: block; color: #555; padding-top: 1px; margin-bottom: -1px; }
.tasks svg { width: 13px; height: 12px; margin: 3px 11px 0 0; }
.tasks em { font-style: normal; font-size: 10.800px; color: #999; width: 33px; line-height: 18px; }
.tasks u { width: 12px; height: 12px; border-radius: 50%; background: #ccc; margin-top: 3px; flex: none; }

.scrollbar { width: 17px; background: #f1f1f1; display: flex; flex-direction: column; align-items: center; padding-top: 7px; }
.thumb { width: 13px; height: 586px; margin-top: 37px; background: #c1c1c1; }
.scrollbar .down { margin: auto 0 6px; }

/* find bar */
.findbar { position: absolute; left: 1594px; top: 88px; width: 306px; height: 42px; background: #fff; border: 1px solid #b6b6b6; border-radius: 3px; box-shadow: 0 1px 3px rgba(0,0,0,.4); display: flex; align-items: center; padding-left: 7px; color: #000; z-index: 3; }
.query { flex: 1; font-size: 12px; }
.count { color: #aaa; padding-right: 13px; border-right: 1px solid #ddd; height: 24px; line-height: 23px; margin-right: 14px; font-size: 12px; }
.findbar svg { margin-right: 16px; }
.findbar svg:last-child { margin-right: 10px; }

/* toast */
.toast { position: absolute; left: 781px; top: 974px; width: 359px; height: 42px; border-radius: 3px; background: #555; box-shadow: 0 1px 4px rgba(0,0,0,.45); color: #fff; display: flex; align-items: center; padding: 1px 0 0 20px; white-space: nowrap; z-index: 2; }
.toast span { width: 209px; font-size: 12.300px; }
.undo { margin-left: 20px; color: #ea8f86; width: 59px; }
.hide { color: #999; }

/* run dialog */
.run { position: absolute; left: 15px; top: 823px; width: 399px; height: 206px; border: 1px solid #777; background: #fff; display: flex; flex-direction: column; color: #000; font-size: 11.300px; z-index: 4; }
.run-title { height: 31px; display: flex; align-items: center; padding: 0 9px 1px 8px; gap: 5px; border-bottom: 1px solid #eee; }
.run-x { margin-left: auto; }
.run-body { height: 112px; padding: 20px 14px 0 12px; }
.run-info { display: flex; gap: 19px; align-items: center; height: 34px; line-height: 15px; white-space: nowrap; }
.run-info p { padding-bottom: 4px; }
.run-open { display: flex; align-items: center; margin-top: 14px; }
.run-open label { width: 51px; }
.combo { width: 320px; height: 23px; border: 1px solid #0078d7; display: flex; align-items: center; justify-content: space-between; padding: 0 3px 0 3px; }
.combo span { background: #3399ff; color: #fff; line-height: 15px; width: 57px; white-space: nowrap; border-right: 1px solid #c70; }
.run-foot { flex: 1; background: #f0f0f0; display: flex; justify-content: flex-end; gap: 9px; padding: 19px 12px 0 0; }
.run-foot button { width: 86px; height: 24px; padding: 0 0 2px; background: #e1e1e1; border: 1px solid #adadad; font: inherit; color: #000; }
.run-foot button:nth-child(2) { margin-left: -1px; }
.run-foot .default { border: 2px solid #0078d7; }

/* taskbar */
.taskbar { height: 40px; flex: none; background: #000e10; display: flex; align-items: stretch; }
.item { width: 49px; display: flex; align-items: center; justify-content: center; position: relative; }
.item:first-child { width: 48px; }
.item.search { width: 51px; padding-right: 3px; }
.open::after { content: ""; position: absolute; left: 4px; bottom: 0; width: 40px; height: 2px; background: #99ccff; }
.multi::after { background: linear-gradient(90deg, #99ccff 31px, #7795ae 31px); }
.item.current { width: 48px; background: #373f41; }
.current::after { left: 0; width: 48px; }
.tray { margin-left: auto; width: 212px; display: flex; align-items: center; color: #fff; }
.tray > svg { margin-right: 12px; }
.tray > svg:first-child { margin-right: 13px; }
.tray > svg:nth-child(3) { margin: 0 7px 0 -4px; }
.ime { font-size: 19px; margin-right: 10px; width: 13px; line-height: 20px; }
.clock { display: flex; flex-direction: column; align-items: center; font-size: 12px; line-height: 18px; white-space: nowrap; letter-spacing: -.4px; width: 59px; padding-top: 1px; }
.notif { position: relative; margin-left: 18px; width: 28px; height: 16px; }
.notif span { position: absolute; left: 8px; top: 6px; width: 16px; height: 16px; border-radius: 50%; background: #333; border: 1px solid #888; font-size: 11px; line-height: 14px; text-align: center; font-weight: 600; }
.peek { width: 1px; align-self: stretch; background: #555f61; }
```
